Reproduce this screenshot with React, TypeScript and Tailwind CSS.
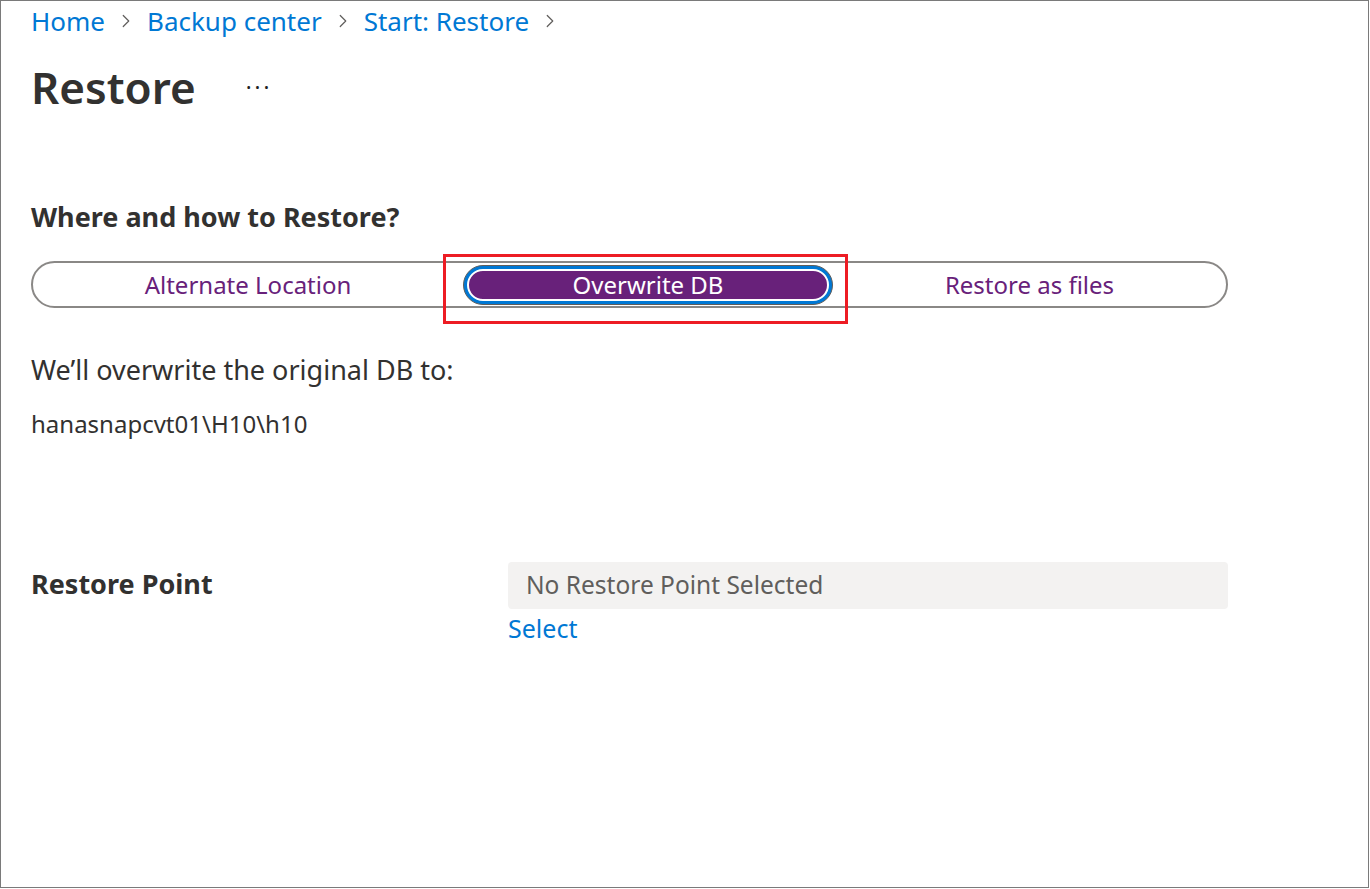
import { ChevronRight } from 'lucide-react';

const crumbs = ['Home', 'Backup center', 'Start: Restore'];

const App = () => {
  return (
    <div
      className="w-[1369px] h-[888px] border border-[#7a7a7a] bg-white text-[#323130] overflow-hidden"
      style={{ fontFamily: '"Segoe UI", "Noto Sans", sans-serif' }}
    >
      <div className="pl-[30px] pr-[140px]">
        {/* breadcrumb */}
        <nav className="flex items-center h-[40px] text-[26px] text-[#0078d4]">
          {crumbs.map((c) => (
            <span key={c} className="flex items-center">
              <span>{c}</span>
              <ChevronRight className="w-[22px] h-[22px] mx-[10px] text-[#605e5c]" strokeWidth={1.3} />
            </span>
          ))}
        </nav>

        {/* title */}
        <div className="flex items-center h-[92px]">
          <h1 className="text-[44px] font-semibold leading-none">Restore</h1>
          <span className="ml-[50px] text-[22px] tracking-[3px] text-[#201f1e] -mt-[14px]">...</span>
        </div>

        <h2 className="mt-[64px] text-[27px] font-bold leading-[40px]">Where and how to Restore?</h2>

        {/* segmented control */}
        <div className="mt-[24px] w-[1197px] h-[47px] rounded-full border-2 border-[#8a8886] flex items-center">
          <div className="w-[430px] text-center text-[24px] text-[#68217a]">Alternate Location</div>
          <div className="relative">
            <div className="absolute -left-[20px] -right-[15px] -top-[11px] -bottom-[19px] border-[3px] border-[#ed1c24]" />
            <div className="w-[370px] h-[40px] rounded-full border border-[#605e5c] bg-[#0078d4] p-[3px]">
              <div className="w-full h-full rounded-full border-[2px] border-white bg-[#68217a] flex items-center justify-center text-white text-[24px]">
                Overwrite DB
              </div>
            </div>
          </div>
          <div className="flex-1 text-center text-[24px] text-[#68217a]">Restore as files</div>
        </div>

        <p className="mt-[42px] text-[27px] leading-[40px]">We’ll overwrite the original DB to:</p>
        <p className="mt-[18px] text-[24px] leading-[32px]">hanasnapcvt01\H10\h10</p>

        {/* restore point */}
        <div className="mt-[120px] flex">
          <div className="w-[480px] pt-[4px] text-[27px] font-bold">Restore Point</div>
          <div className="flex flex-col pt-[2px] pl-[2px]">
            <div className="w-[720px] h-[47px] rounded-[4px] bg-[#f3f2f1] flex items-center px-[18px] text-[24.5px] text-[#605e5c]">
              No Restore Point Selected
            </div>
            <span className="mt-[1px] text-[25px] text-[#0078d4]">Select</span>
          </div>
        </div>
      </div>
    </div>
  );
};

export default App;
